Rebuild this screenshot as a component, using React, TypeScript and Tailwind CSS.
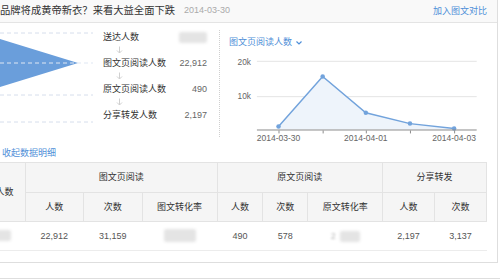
const blue = '#4f8fd8'

const funnelSteps = [
  { label: '送达人数', value: null },
  { label: '图文页阅读人数', value: '22,912' },
  { label: '原文页阅读人数', value: '490' },
  { label: '分享转发人数', value: '2,197' },
]

const points: [number, number][] = [
  [49, 76],
  [94, 25],
  [138, 62],
  [183, 73],
  [228, 78],
]

function Blurred({ className }: { className: string }) {
  return <span className={`inline-block rounded-[2px] bg-[#e4e4e4] blur-[1.5px] ${className}`} />
}

function DownArrow() {
  return (
    <svg width="7" height="8" viewBox="0 0 7 8">
      <path d="M3.5 0.5V7M1 4.5L3.5 7L6 4.5" stroke="#d0d0d0" strokeWidth="1" fill="none" />
    </svg>
  )
}

function Funnel() {
  return (
    <div className="flex w-[219px]">
      <svg width="100" height="121" viewBox="0 0 100 121" className="shrink-0">
        <polygon points="0,16 78,40 0,64" fill="#6a9edb" />
        {[10, 40, 72, 99].map(y => (
          <line key={y} x1="0" y1={y} x2="93" y2={y} stroke={y === 40 ? '#dfe7f3' : '#d6deec'} strokeDasharray="4 3" />
        ))}
      </svg>
      <div className="flex w-[107px] flex-col pt-[7px]">
        {funnelSteps.map((step, i) => (
          <div key={step.label}>
            {i > 0 && (
              <div className="flex h-[12px] items-center pl-[16px]">
                <DownArrow />
              </div>
            )}
            <div className="flex h-[14px] items-center justify-between pl-[3px]">
              <span className="text-[9px] text-[#333]">{step.label}</span>
              {step.value ? (
                <span className="text-[9px] text-[#666]">{step.value}</span>
              ) : (
                <Blurred className="h-[11px] w-[28px]" />
              )}
            </div>
          </div>
        ))}
      </div>
    </div>
  )
}

function Chart() {
  const line = points.map(p => p.join(',')).join(' ')
  const area = `${line} 228,79 49,79`

  return (
    <div className="flex flex-col pl-[9px] pt-[14px]">
      <div className="flex h-[12px] items-center gap-[4px] text-[9px]" style={{ color: blue }}>
        <span>图文页阅读人数</span>
        <svg width="6" height="4" viewBox="0 0 6 4">
          <polyline points="0.5,0.5 3,3 5.5,0.5" stroke={blue} strokeWidth="1.2" fill="none" />
        </svg>
      </div>
      <svg width="258" height="94" viewBox="0 0 258 94" className="-ml-px mt-[3px]" fontFamily="Liberation Sans, sans-serif">
        <text x="21" y="13" fontSize="8.5" fill="#666" textAnchor="end">20k</text>
        <text x="21" y="48" fontSize="8.5" fill="#666" textAnchor="end">10k</text>
        <line x1="27" y1="9.5" x2="251" y2="9.5" stroke="#e3e3e3" />
        <line x1="27" y1="45.5" x2="251" y2="45.5" stroke="#e3e3e3" />
        <polygon points={area} fill="#eef4fb" />
        <polyline points={line} stroke="#72a3dc" strokeWidth="1.5" fill="none" />
        {points.map(([x, y]) => (
          <circle key={x} cx={x} cy={y} r="2.3" fill="#72a3dc" />
        ))}
        <line x1="27" y1="79.5" x2="251" y2="79.5" stroke="#8a8a8a" />
        {points.map(([x]) => (
          <line key={x} x1={x + 0.5} y1="80" x2={x + 0.5} y2="83" stroke="#8a8a8a" />
        ))}
        {[
          [49, '2014-03-30'],
          [138, '2014-04-01'],
          [228, '2014-04-03'],
        ].map(([x, d]) => (
          <text key={d} x={x} y="91" fontSize="8.7" fill="#666" textAnchor="middle">
            {d}
          </text>
        ))}
      </svg>
    </div>
  )
}

const th = 'border border-[#e3e3e3] bg-[#f5f5f5] font-normal text-[#333]'
const td = 'border-b border-[#ececec] text-center text-[#555]'

function DataTable() {
  return (
    <div className="w-[487px] overflow-hidden">
      <table className="-ml-[17px] table-fixed border-collapse text-[9px]">
        <colgroup>
          {[42, 58, 59, 75, 46, 45, 75, 52, 52].map((w, i) => (
            <col key={i} style={{ width: w }} />
          ))}
        </colgroup>
        <thead>
          <tr className="h-[30px]">
            <th rowSpan={2} className={th}>人数</th>
            <th colSpan={3} className={th}>图文页阅读</th>
            <th colSpan={3} className={th}>原文页阅读</th>
            <th colSpan={2} className={th}>分享转发</th>
          </tr>
          <tr className="h-[29px]">
            {['人数', '次数', '图文转化率', '人数', '次数', '原文转化率', '人数', '次数'].map((h, i) => (
              <th key={i} className={th}>{h}</th>
            ))}
          </tr>
        </thead>
        <tbody>
          <tr className="h-[29px]">
            <td className={td}><Blurred className="h-[11px] w-[14px]" /></td>
            <td className={td}>22,912</td>
            <td className={td}>31,159</td>
            <td className={td}><Blurred className="h-[13px] w-[32px]" /></td>
            <td className={td}>490</td>
            <td className={td}>578</td>
            <td className={td}>
              <span className="inline-flex items-center gap-[4px]">
                <span className="text-[#bbb] blur-[1px]">2</span>
                <Blurred className="h-[11px] w-[20px]" />
              </span>
            </td>
            <td className={td}>2,197</td>
            <td className={td}>3,137</td>
          </tr>
        </tbody>
      </table>
    </div>
  )
}

export default function App() {
  return (
    <div className="h-[280px] w-[500px] overflow-hidden bg-white font-['Liberation_Sans','Noto_Sans_CJK_SC',sans-serif] leading-none">
      <div className="flex h-[263px] w-[498px] flex-col border-b border-r border-[#dedede]">
        <div className="flex h-[23px] shrink-0 items-center justify-between border-b border-[#e4e4e4] bg-[#f9f9f9] pr-[10px]">
          <div className="flex items-center gap-[9px]">
            <span className="text-[10.3px] text-[#333]">品牌将成黄帝新衣？来看大益全面下跌</span>
            <span className="text-[9px] text-[#aaa]">2014-03-30</span>
          </div>
          <span className="text-[9px]" style={{ color: blue }}>加入图文对比</span>
        </div>

        <div className="flex h-[121px] shrink-0">
          <Funnel />
          <div className="my-[7px] w-0 border-l border-dotted border-[#cfcfcf]" />
          <Chart />
        </div>

        <div className="flex h-[18px] shrink-0 items-center pl-[2px] text-[9px]" style={{ color: blue }}>
          收起数据明细
        </div>

        <DataTable />
      </div>
      <div className="mt-[15px] border-t border-[#dedede]" />
    </div>
  )
}
